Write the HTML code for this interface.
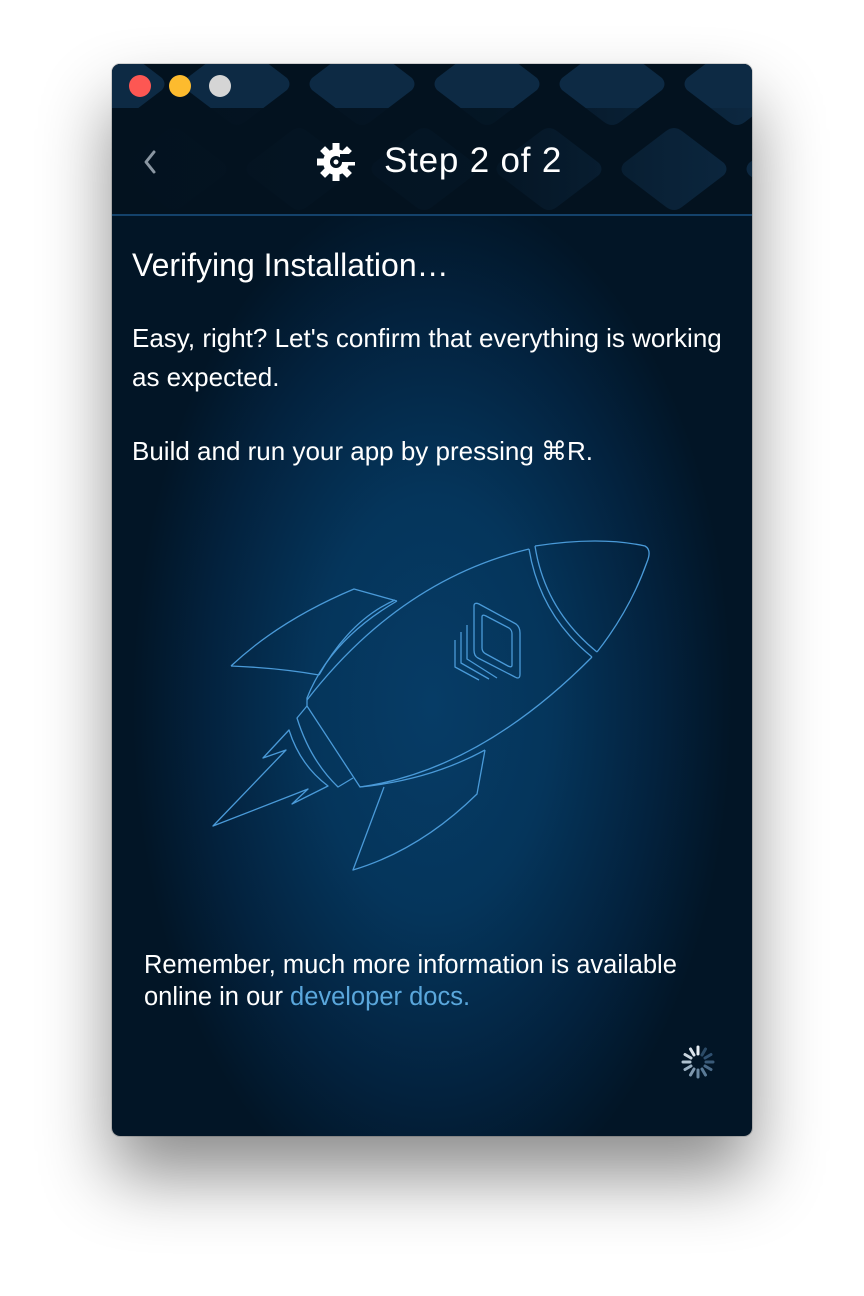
<!DOCTYPE html>
<html><head><meta charset="utf-8"><style>
html,body{margin:0;padding:0;width:864px;height:1296px;background:#fff;overflow:hidden;font-family:"Liberation Sans",sans-serif}
.win{position:absolute;left:112px;top:64px;width:640px;height:1072px;border-radius:8px;overflow:hidden;
box-shadow:0 40px 70px rgba(0,0,0,.45),0 0 0 1px rgba(0,0,0,.15);
background:radial-gradient(ellipse 300px 520px at 320px 640px,#063c66 0%,#05355b 40%,#03223e 75%,#021526 100%)}
.hdr{position:absolute;left:0;top:0;width:640px;height:150px;background:#03121f;overflow:hidden;border-bottom:2px solid #14426b}
.t{position:absolute;color:#fff}
</style></head><body>
<div class="win">
<div class="hdr">
<svg width="640" height="150" style="position:absolute;left:0;top:0">
<defs>
<path id="d" d="M-50 -6 Q-55 0 -50 6 L-8 38 Q0 44 8 38 L50 6 Q55 0 50 -6 L8 -38 Q0 -44 -8 -38 Z" fill="#0d2a44"/>
<linearGradient id="g" x1="0" x2="1" y1="0" y2="0"><stop offset="0" stop-color="#03121f" stop-opacity="1"/><stop offset=".6" stop-color="#03121f" stop-opacity=".85"/><stop offset="1" stop-color="#03121f" stop-opacity=".1"/></linearGradient>
</defs>
<g>
<use href="#d" x="0" y="20"/><use href="#d" x="125" y="20"/><use href="#d" x="250" y="20"/><use href="#d" x="375" y="20"/><use href="#d" x="500" y="20"/><use href="#d" x="625" y="20"/>
<use href="#d" x="62" y="105"/><use href="#d" x="187" y="105"/><use href="#d" x="312" y="105"/><use href="#d" x="437" y="105"/><use href="#d" x="562" y="105"/><use href="#d" x="687" y="105"/>
</g>
<rect x="0" y="44" width="640" height="106" fill="url(#g)"/>
<circle cx="28" cy="22" r="11" fill="#fd5753"/>
<circle cx="68" cy="22" r="11" fill="#fdbb2e"/>
<circle cx="108" cy="22" r="11" fill="#d5d5d5"/>
<path d="M42 88 l-8 10 l8 10" fill="none" stroke="#8a96a2" stroke-width="3" stroke-linecap="round" stroke-linejoin="round"/>
<g fill="#fff" transform="translate(224 98)">
<circle r="13"/>
<rect x="-3.5" y="-19" width="7" height="8"/><rect x="-3.5" y="11" width="7" height="8"/>
<rect x="-19" y="-3.5" width="8" height="7"/><rect x="11" y="-3.5" width="8" height="7"/>
<rect x="-3.5" y="-19" width="7" height="8" transform="rotate(45)"/><rect x="-3.5" y="11" width="7" height="8" transform="rotate(45)"/>
<rect x="-3.5" y="-19" width="7" height="8" transform="rotate(-45)"/><rect x="-3.5" y="11" width="7" height="8" transform="rotate(-45)"/>
<circle r="6" fill="#03121f"/><circle r="2.5" fill="#fff"/>
<rect x="4" y="-8" width="16" height="8" fill="#03121f"/>
</g>
</svg>
<div class="t" style="left:272px;top:77px;font-size:35px;letter-spacing:.8px">Step 2 of 2</div>
</div>
<div class="t" style="left:20px;top:183px;font-size:32px">Verifying Installation…</div>
<div class="t" style="left:20px;top:255px;font-size:26px;line-height:39px;width:605px">Easy, right? Let's confirm that everything is working as expected.</div>
<div class="t" style="left:20px;top:372px;font-size:26px">Build and run your app by pressing ⌘R.</div>
<div class="t" style="left:32px;top:885px;font-size:25.5px;line-height:32px;width:572px">Remember, much more information is available online in our <span style="color:#5aa7dc">developer docs.</span></div>
<svg width="640" height="1072" style="position:absolute;left:0;top:0" fill="none" stroke="#4a9ad8" stroke-width="1.3" stroke-linejoin="round">
<g transform="translate(-112 -64)">
<path d="M231 666 Q280 620 354 589 L397 601"/>
<path d="M231 666 Q280 668 319 675"/>
<path d="M397 601 Q330 640 307 698 L307 706 L360 787 Q480 770 592 657"/>
<path d="M307 700 Q400 580 529 549"/>
<path d="M319 675 Q350 620 395 600"/>
<path d="M535 546 Q600 536 645 546 Q652 550 647 562 Q630 610 597 652"/>
<path d="M529 549 Q540 615 592 657"/>
<path d="M535 546 Q545 610 597 652"/>
<path d="M384 787 L353 870 Q420 850 477 794 L485 750"/>
<path d="M360 787 Q430 780 485 750"/>
<path d="M307 706 L297 718 Q310 760 338 787 L353 778"/>
<path d="M213 826 L286 750 L263 758 L289 730 Q300 765 328 786 L292 804 L308 789 Z"/>
<path d="M474 606 Q474 602 479 604 L516 624 Q520 627 520 633 L520 674 Q520 680 515 677 L478 658 Q474 656 474 650 Z"/>
<path d="M482 617 Q482 614 486 616 L509 628 Q512 630 512 634 L512 665 Q512 668 508 666 L486 654 Q482 652 482 648 Z"/>
<path d="M467 625 L467 659 L497 678"/>
<path d="M461 632 L461 663 L489 679"/>
<path d="M455 640 L455 667 L479 680"/>
</g>
<g transform="translate(586 998)" stroke-width="3" stroke-linecap="round">
<line x1="0" y1="-8" x2="0" y2="-15" stroke="#e8eef4"/>
<line x1="4" y1="-7" x2="7.5" y2="-13" stroke="#2b4a66" />
<line x1="7" y1="-4" x2="13" y2="-7.5" stroke="#2f5070"/>
<line x1="8" y1="0" x2="15" y2="0" stroke="#3a5a78"/>
<line x1="7" y1="4" x2="13" y2="7.5" stroke="#4a6a88"/>
<line x1="4" y1="7" x2="7.5" y2="13" stroke="#5a7a96"/>
<line x1="0" y1="8" x2="0" y2="15" stroke="#6a88a2"/>
<line x1="-4" y1="7" x2="-7.5" y2="13" stroke="#8098ae"/>
<line x1="-7" y1="4" x2="-13" y2="7.5" stroke="#98aec0"/>
<line x1="-8" y1="0" x2="-15" y2="0" stroke="#b0c2d0"/>
<line x1="-7" y1="-4" x2="-13" y2="-7.5" stroke="#c8d4de"/>
<line x1="-4" y1="-7" x2="-7.5" y2="-13" stroke="#dce4ec"/>
</g>
</svg>
</div>
</body></html>
